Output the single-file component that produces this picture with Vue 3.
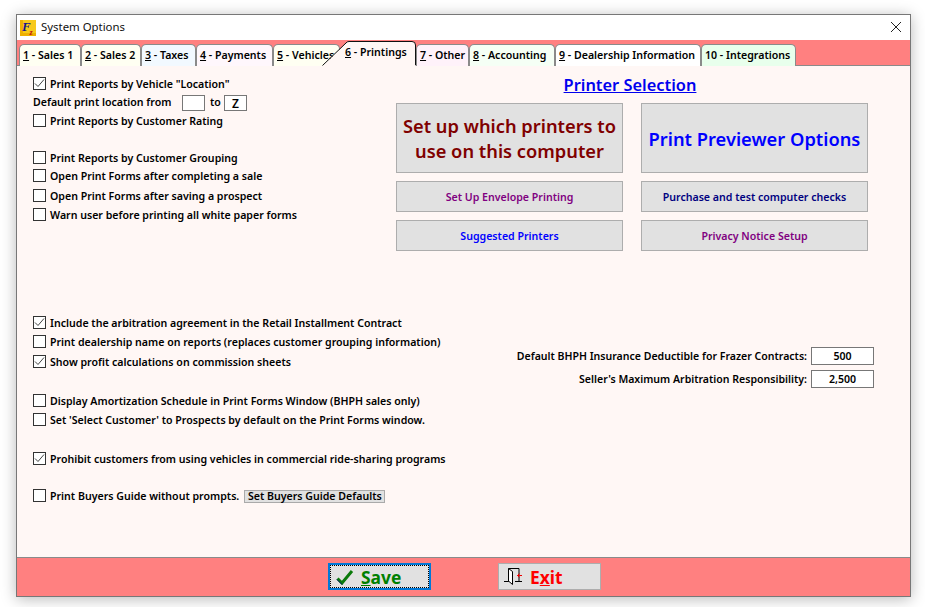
<script setup>
const tabs = [
  { key: '1', rest: ' - Sales 1', w: 62, bg: '#fffff2' },
  { key: '2', rest: ' - Sales 2', w: 60, bg: '#fffff2' },
  { key: '3', rest: ' - Taxes', w: 55, bg: '#f2f9ff' },
  { key: '4', rest: ' - Payments', w: 77, bg: '#fff7fc' },
  { key: '5', rest: ' - Vehicles', w: 67, bg: '#fffff2' },
  { key: '6', rest: ' - Printings', w: 94, bg: '#fff7f5', active: true },
  { key: '7', rest: ' - Other', w: 53, bg: '#fff2fa' },
  { key: '8', rest: ' - Accounting', w: 86, bg: '#f5fff5' },
  { key: '9', rest: ' - Dealership Information', w: 146, bg: '#ffffff' },
  { key: '', rest: '10 - Integrations', w: 95, bg: '#e8ffec' }
]
const rows = [
  { label: 'Print Reports by Vehicle "Location"', checked: true, gap: 'g0' },
  { kind: 'location', gap: 'g18' },
  { label: 'Print Reports by Customer Rating', gap: 'g19' },
  { label: 'Print Reports by Customer Grouping', gap: 'g37' },
  { label: 'Open Print Forms after completing a sale', gap: 'g18' },
  { label: 'Open Print Forms after saving a prospect', gap: 'g20' },
  { label: 'Warn user before printing all white paper forms', gap: 'g19' },
  { label: 'Include the arbitration agreement in the Retail Installment Contract', checked: true, gap: 'g108' },
  { label: 'Print dealership name on reports (replaces customer grouping information)', gap: 'g19' },
  { label: 'Show profit calculations on commission sheets', checked: true, gap: 'g20' },
  { label: 'Display Amortization Schedule in Print Forms Window (BHPH sales only)', gap: 'g39' },
  { label: "Set 'Select Customer' to Prospects by default on the Print Forms window.", gap: 'g19' },
  { label: 'Prohibit customers from using vehicles in commercial ride-sharing programs', checked: true, gap: 'g39' },
  { label: 'Print Buyers Guide without prompts.', kind: 'guide', gap: 'g37' }
]
</script>

<template>
  <div class="stage">
    <div class="window">
      <header class="titlebar">
        <svg class="logo" width="16" height="16" viewBox="0 0 16 16">
          <rect width="16" height="16" fill="#f7c91c" />
          <path d="M0 0h3v16H0zM0 13h16v3H0z" fill="#eeb000" />
          <text x="2" y="11" class="logo-f">F</text>
          <text x="9.5" y="15" class="logo-z">z</text>
        </svg>
        <span class="title">System Options</span>
        <svg class="close" width="12" height="12" viewBox="0 0 12 12">
          <path d="M1 1l10 10M11 1L1 11" stroke="#222" stroke-width="1" fill="none" />
        </svg>
      </header>

      <nav class="tabs">
        <div
          v-for="t in tabs"
          :key="t.rest"
          class="tab"
          :class="{ active: t.active }"
          :style="{ width: t.w + 'px', background: t.active ? 'transparent' : t.bg }"
        >
          <svg v-if="t.active" class="tab-shape" width="94" height="26" viewBox="0 0 94 26">
            <path d="M0.5 25.5L24 2Q25 0.5 27 0.5H90Q93.5 0.5 93.5 4V25.5" fill="#fff7f5" stroke="none" />
            <path d="M0.5 24.5L24 2Q25 0.5 27 0.5H90Q93.5 0.5 93.5 4V24" fill="none" stroke="#111" />
          </svg>
          <span class="tab-text"><u v-if="t.key">{{ t.key }}</u>{{ t.rest }}</span>
        </div>
      </nav>

      <main class="content">
        <section class="left">
          <div v-for="(r, i) in rows" :key="i" class="row" :class="r.gap">
            <template v-if="r.kind === 'location'">
              <span class="loc-label">Default print location from</span>
              <span class="field loc"></span>
              <span class="to">to</span>
              <span class="field loc z">Z</span>
            </template>
            <template v-else>
              <span class="check">
                <svg v-if="r.checked" width="11" height="11" viewBox="0 0 11 11">
                  <path d="M1 5.5l3 3L10 1.5" stroke="#444" stroke-width="1" fill="none" />
                </svg>
              </span>
              <span class="label">{{ r.label }}</span>
              <button v-if="r.kind === 'guide'" class="mini">Set Buyers Guide Defaults</button>
            </template>
          </div>
        </section>

        <section class="right">
          <h2 class="heading">Printer Selection</h2>
          <div class="btn-grid">
            <button class="btn big maroon">Set up which printers to use on this computer</button>
            <button class="btn big blue">Print Previewer Options</button>
            <button class="btn purple">Set Up Envelope Printing</button>
            <button class="btn navy">Purchase and test computer checks</button>
            <button class="btn blue">Suggested Printers</button>
            <button class="btn purple">Privacy Notice Setup</button>
          </div>
          <div class="amounts">
            <div class="amount">
              <span>Default BHPH Insurance Deductible for Frazer Contracts:</span>
              <span class="field num">500</span>
            </div>
            <div class="amount second">
              <span>Seller's Maximum Arbitration Responsibility:</span>
              <span class="field num">2,500</span>
            </div>
          </div>
        </section>
      </main>

      <footer class="footer">
        <button class="action save">
          <svg width="18" height="16" viewBox="0 0 18 16">
            <path d="M1.5 9.5l4.5 4.5L16 2" stroke="#0a7a0a" stroke-width="3" fill="none" />
            <path d="M1 10.5l5 5" stroke="#001a66" stroke-width="1" fill="none" />
          </svg>
          <span><u>S</u>ave</span>
        </button>
        <button class="action exit">
          <svg width="19" height="17" viewBox="0 0 19 17">
            <path d="M0 13.5h5M11 13.5h7" stroke="#000" fill="none" />
            <path d="M4.5 0.5h10.5v13" stroke="#000" fill="none" />
            <path d="M4.5 0.5v12.5l4 3.5V3.5z" stroke="#000" fill="#fff" />
            <path d="M18 7.5h-4.5M15.5 5.5l-2 2 2 2" stroke="#e00" fill="none" />
          </svg>
          <span>E<u>x</u>it</span>
        </button>
      </footer>
    </div>
  </div>
</template>

<style>
html, body { margin: 0; background: #fff; }
</style>

<style scoped>
.stage {
  width: 925px;
  height: 607px;
  padding: 14px 14px 0 16px;
  box-sizing: border-box;
  background: #fff;
  font-family: "Noto Sans", "Open Sans", sans-serif;
  overflow: hidden;
}
.window {
  width: 895px;
  height: 583px;
  box-sizing: border-box;
  border: 1px solid #777;
  background: #fff;
  display: flex;
  flex-direction: column;
  box-shadow: 0 2px 14px rgba(0, 0, 0, 0.28);
}
.titlebar {
  height: 25px;
  flex: none;
  display: flex;
  align-items: center;
  padding: 0 8px 0 3px;
  background: #fff;
}
.logo { flex: none; }
.logo-f { font: italic bold 13px "Liberation Serif", serif; fill: #14148c; }
.logo-z { font: italic bold 8px "Liberation Serif", serif; fill: #c01010; }
.title {
  margin-left: 5px;
  margin-top: -2px;
  font-size: 11.4px;
  color: #111;
}
.close { margin-left: auto; margin-top: -2px; }
.tabs {
  height: 26px;
  flex: none;
  display: flex;
  align-items: flex-end;
  padding-left: 2px;
  background: #ff8080;
  border-bottom: 1px solid #8a8a8a;
  box-sizing: border-box;
}
.tab {
  height: 22px;
  margin-bottom: -1px;
  box-sizing: border-box;
  border: 1px solid #8a8a8a;
  border-bottom: none;
  border-radius: 5px 5px 0 0;
  font-size: 10.6px;
  font-weight: 600;
  line-height: 20px;
  color: #000;
  padding-left: 3px;
  white-space: nowrap;
  overflow: hidden;
  flex: none;
}
.tab.active {
  height: 25px;
  border: none;
  margin-left: -18px;
  padding-left: 23px;
  line-height: 22px;
  position: relative;
  z-index: 1;
  overflow: visible;
}
.tab-shape {
  position: absolute;
  left: 0;
  top: 0;
}
.tab-text { position: relative; }
.content {
  flex: 1;
  display: flex;
  background: #fff7f5;
  min-height: 0;
}
.left {
  width: 379px;
  flex: none;
  box-sizing: border-box;
  padding: 8px 0 0 16px;
}
.row {
  height: 19px;
  display: flex;
  align-items: center;
  font-size: 10.6px;
  font-weight: 600;
  color: #000;
  white-space: nowrap;
}
.g0 { margin-top: 0; }
.g18 { margin-top: -1px; }
.g19 { margin-top: 0; }
.g20 { margin-top: 1px; }
.g37 { margin-top: 18px; }
.g39 { margin-top: 20px; }
.g108 { margin-top: 89px; }
.check {
  width: 13px;
  height: 13px;
  flex: none;
  box-sizing: border-box;
  border: 1px solid #333;
  background: #fff;
  margin-right: 4px;
  display: flex;
  align-items: center;
  justify-content: center;
}
.loc-label { width: 149px; flex: none; }
.field {
  box-sizing: border-box;
  border: 1px solid #777;
  background: #fff;
  display: flex;
  align-items: center;
  justify-content: center;
}
.loc {
  width: 23px;
  height: 16px;
  align-self: flex-start;
  margin-top: 3px;
}
.z { font-size: 12px; }
.to { margin: 0 3px 0 5px; }
.mini {
  margin-left: 5px;
  margin-top: 1px;
  height: 13px;
  width: 141px;
  padding: 0;
  border: 1px solid #aaa;
  background: #e1e1e1;
  font: 600 10.6px/11px "Noto Sans", sans-serif;
  color: #000;
}
.right {
  flex: 1;
  min-width: 0;
  display: flex;
  flex-direction: column;
}
.heading {
  margin: 8px 0 0 0;
  width: 468px;
  height: 29px;
  text-align: center;
  font-size: 16.4px;
  font-weight: 600;
  line-height: 22px;
  color: #0000ee;
  text-decoration: underline;
}
.btn-grid {
  display: grid;
  grid-template-columns: 227px 227px;
  grid-template-rows: 70px 31px 31px;
  gap: 8px 18px;
}
.btn {
  border: 1px solid #adadad;
  background: #e1e1e1;
  padding: 0 4px;
  font: 600 10.6px/14px "Noto Sans", sans-serif;
}
.btn.big { font-size: 18.3px; line-height: 25px; }
.maroon { color: #800000; }
.blue { color: #0000ff; }
.purple { color: #800080; }
.navy { color: #000080; }
.amounts {
  margin-top: 96px;
  width: 478px;
  font-size: 10.55px;
  font-weight: 600;
  color: #000;
}
.amount {
  height: 18px;
  display: flex;
  justify-content: flex-end;
  align-items: center;
  gap: 4px;
}
.amount.second { margin-top: 5px; }
.num { width: 63px; height: 18px; }
.footer {
  height: 39px;
  flex: none;
  box-sizing: border-box;
  border-top: 1px solid #8a8a8a;
  background: #ff8080;
  padding: 5px 0 0 311px;
  display: flex;
  align-items: flex-start;
  gap: 67px;
}
.action {
  width: 103px;
  height: 27px;
  border: 1px solid #adadad;
  background: #e1e1e1;
  display: flex;
  align-items: center;
  padding: 0 0 0 5px;
  font: 700 17.4px/20px "Noto Sans", sans-serif;
}
.save {
  color: #008000;
  border: 2px solid #0078d7;
  outline: 1px dotted #000;
  outline-offset: -3px;
  padding-left: 6px;
  gap: 7px;
}
.exit { color: #ff0000; gap: 7px; }
</style>
